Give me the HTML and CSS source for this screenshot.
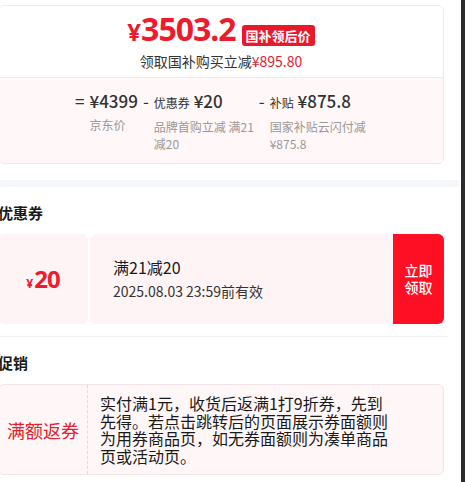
FILE: index.html
```html
<!DOCTYPE html>
<html lang="zh-CN">
<head>
    <meta charset="UTF-8">
    <meta name="viewport" content="width=device-width, initial-scale=1.0">
    <title>国补优惠详情</title>
    <link rel="stylesheet" href="styles.css">
</head>

<body>

<div class="screen">
    <main class="page">

        <!-- Prix après subvention -->
        <section class="price-card">
            <div class="price-top">
                <div class="price-line">
                    <span class="price"><span class="yen">¥</span><span class="num">3503.2</span></span>
                    <span class="tag">国补领后价</span>
                </div>
                <p class="save">领取国补购买立减<em>¥895.80</em></p>
            </div>
            <div class="calc">
                <div class="calc-item">
                    <span class="op">=</span>
                    <div class="calc-body">
                        <div class="amt">¥4399</div>
                        <div class="note">京东价</div>
                    </div>
                </div>
                <div class="calc-item">
                    <span class="op">-</span>
                    <div class="calc-body wide">
                        <div class="amt"><small>优惠券</small> ¥20</div>
                        <div class="note">品牌首购立减 满21减20</div>
                    </div>
                </div>
                <div class="calc-item">
                    <span class="op">-</span>
                    <div class="calc-body wide">
                        <div class="amt"><small>补贴</small> ¥875.8</div>
                        <div class="note">国家补贴云闪付减¥875.8</div>
                    </div>
                </div>
            </div>
        </section>

        <div class="gap-band"></div>

        <!-- Coupons -->
        <section class="block first">
            <h2>优惠券</h2>
            <div class="coupon">
                <div class="coupon-value"><span class="cy">¥</span>20</div>
                <div class="coupon-body">
                    <div class="coupon-title">满21减20</div>
                    <div class="coupon-date">2025.08.03 23:59前有效</div>
                </div>
                <button class="coupon-btn">立即<br>领取</button>
            </div>
        </section>

        <!-- Promotions -->
        <section class="block">
            <h2>促销</h2>
            <div class="promo">
                <div class="promo-label">满额返券</div>
                <p class="promo-text">实付满1元，收货后返满1打9折券，先到先得。若点击跳转后的页面展示券面额则为用券商品页，如无券面额则为凑单商品页或活动页。</p>
            </div>
        </section>

    </main>
    <div class="scrollbar"></div>
</div>

</body>
</html>
```

FILE: styles.css
```css
body {
    margin: 0;
    padding: 0;
    font-family: "Noto Sans CJK SC", "Noto Sans", sans-serif;
    background: #ffffff;
    color: #1a1a1a;
}

.screen {
    display: flex;
    height: 482px;
    overflow: hidden;
}
.page {
    width: 461px;
    overflow: hidden;
}
.scrollbar {
    width: 4px;
    background: #2c2c2c;
}

/* Carte du prix */
.price-card {
    margin: 5px 17px 0 -2px;
    border: 1px solid #f3e6e8;
    border-radius: 6px;
    overflow: hidden;
}
.price-top {
    padding: 9px 0 6px;
    background: #ffffff;
}
.price-line {
    display: flex;
    justify-content: center;
    align-items: center;
    height: 34px;
}
.price {
    color: #ee1b2e;
    font-family: "Noto Sans", sans-serif;
    font-weight: bold;
    line-height: 34px;
}
.yen {
    font-size: 24px;
}
.num {
    font-size: 32px;
    letter-spacing: -1px;
}
.tag {
    margin: 6px 0 0 6px;
    padding: 0 4px;
    height: 21px;
    line-height: 21px;
    font-size: 13px;
    font-weight: bold;
    color: #ffffff;
    background: #e9192c;
    border-radius: 3px;
}
.save {
    margin: 2px 0 0;
    text-align: center;
    font-size: 14px;
    line-height: 20px;
    color: #333333;
}
.save em {
    font-style: normal;
    color: #e4202e;
}

.calc {
    display: flex;
    gap: 5px;
    padding: 12px 0 11px 76px;
    background: #fff7f8;
    border-top: 1px solid #f8e9eb;
}
.calc-item {
    display: flex;
    align-items: flex-start;
}
.op {
    font-size: 17px;
    line-height: 22px;
    color: #333333;
    padding-right: 5px;
}
.amt {
    font-size: 17px;
    line-height: 22px;
    font-weight: 500;
    color: #333333;
    white-space: nowrap;
}
.amt small {
    font-size: 12px;
    font-weight: normal;
}
.calc-body.wide {
    width: 100px;
}
.note {
    margin-top: 4px;
    font-size: 12px;
    line-height: 17px;
    color: #999999;
}

.gap-band {
    height: 7px;
    margin: 16px 2px 0 0;
    background: #f5f6f9;
}

/* Sections */
.block {
    margin-left: -2px;
    padding: 16px 17px 0 0;
}
.block.first {
    margin-right: 13px;
    padding-right: 4px;
    padding-bottom: 12px;
    border-bottom: 1px solid #f1f1f4;
}
.block h2 {
    margin: 0 0 11px;
    font-size: 15px;
    line-height: 20px;
    font-weight: bold;
    color: #1a1a1a;
}

/* Coupon */
.coupon {
    display: flex;
    height: 90px;
}
.coupon-value {
    width: 90px;
    display: flex;
    align-items: baseline;
    justify-content: center;
    padding-top: 30px;
    box-sizing: border-box;
    background: #fff4f5;
    border-radius: 6px 0 0 6px;
    color: #ee1b2e;
    font-family: "Noto Sans", sans-serif;
    font-weight: bold;
    font-size: 24px;
    letter-spacing: -1px;
    line-height: 30px;
}
.cy {
    font-size: 12px;
    margin-right: 2px;
}
.coupon-body {
    position: relative;
    flex: 1;
    margin-left: 2px;
    padding-left: 23px;
    display: flex;
    flex-direction: column;
    justify-content: center;
    background: #fff4f5;
}
.coupon-body::before,
.coupon-body::after {
    content: "";
    position: absolute;
    left: -5px;
    width: 8px;
    height: 8px;
    border-radius: 50%;
    background: #ffffff;
}
.coupon-body::before {
    top: -4px;
}
.coupon-body::after {
    bottom: -4px;
}
.coupon-title {
    font-size: 16px;
    line-height: 20px;
    color: #1a1a1a;
}
.coupon-date {
    margin-top: 4px;
    font-size: 14px;
    line-height: 20px;
    color: #333333;
}
.coupon-btn {
    width: 51px;
    border: none;
    padding: 0;
    background: #ff0f23;
    color: #ffffff;
    font-family: inherit;
    font-size: 14px;
    line-height: 17px;
    font-weight: 500;
    border-radius: 0 6px 6px 0;
}

/* Promotion */
.promo {
    display: flex;
    border: 1px solid #f5e4e7;
    border-radius: 6px;
    background: #fff6f7;
}
.promo-label {
    width: 88px;
    flex-shrink: 0;
    display: flex;
    align-items: center;
    justify-content: center;
    border-right: 1px dashed #dddddd;
    font-size: 18px;
    color: #e4202e;
}
.promo-text {
    margin: 0;
    padding: 10px 52px 9px 12px;
    font-size: 16px;
    line-height: 17.5px;
    color: #1a1a1a;
}
```
